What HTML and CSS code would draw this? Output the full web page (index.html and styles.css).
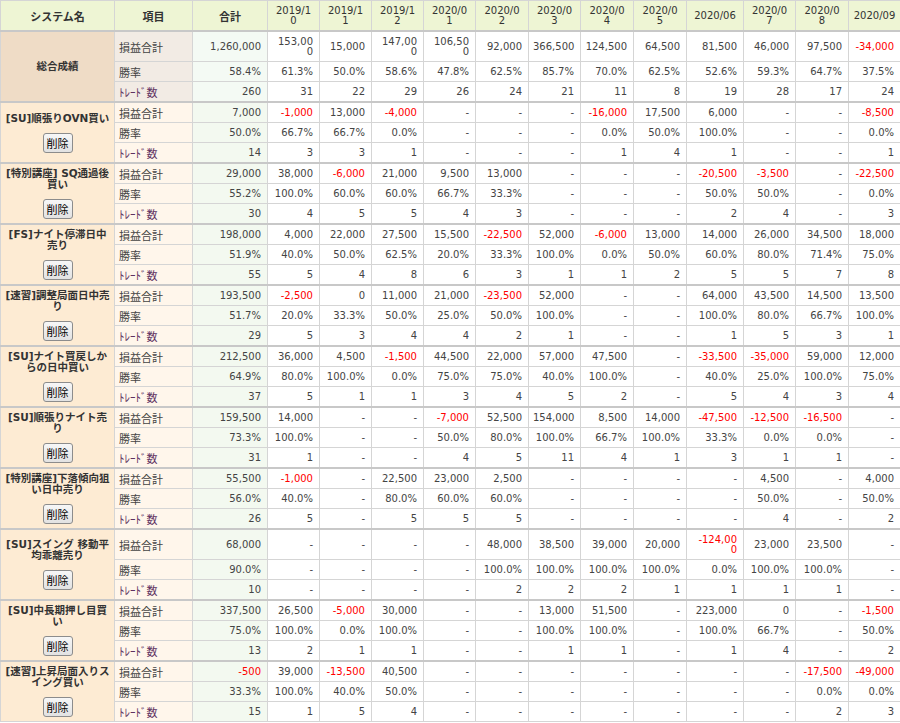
FILE: index.html
```html
<!DOCTYPE html>
<html lang="ja">
<head>
<meta charset="utf-8">
<title>システム成績</title>
<link rel="stylesheet" href="styles.css">
</head>
<body>
<table class="perf">
<colgroup>
<col class="c-name"><col class="c-item"><col class="c-total">
<col class="c-m52"><col class="c-m52"><col class="c-m52"><col class="c-m52"><col class="c-m53"><col class="c-m52"><col class="c-m53"><col class="c-m53"><col class="c-m57"><col class="c-m52"><col class="c-m53"><col class="c-m52">
</colgroup>
<thead>
<tr>
<th class="hj">システム名</th><th class="hj">項目</th><th class="hj">合計</th>
<th class="w"><span>2019/10</span></th><th class="w"><span>2019/11</span></th><th class="w"><span>2019/12</span></th><th class="w"><span>2020/01</span></th><th class="w"><span>2020/02</span></th><th class="w"><span>2020/03</span></th><th class="w"><span>2020/04</span></th><th class="w"><span>2020/05</span></th><th>2020/06</th><th class="w"><span>2020/07</span></th><th class="w"><span>2020/08</span></th><th>2020/09</th>
</tr>
</thead>

<tbody class="grp sum">
<tr><td class="nm" rowspan="3"><div class="nm-t">総合成績</div></td><td class="it">損益合計</td><td class="tt">1,260,000</td><td class="w"><span>153,000</span></td><td>15,000</td><td class="w"><span>147,000</span></td><td class="w"><span>106,500</span></td><td>92,000</td><td>366,500</td><td>124,500</td><td>64,500</td><td>81,500</td><td>46,000</td><td>97,500</td><td class="r">-34,000</td></tr>
<tr><td class="it">勝率</td><td class="tt">58.4%</td><td>61.3%</td><td>50.0%</td><td>58.6%</td><td>47.8%</td><td>62.5%</td><td>85.7%</td><td>70.0%</td><td>62.5%</td><td>52.6%</td><td>59.3%</td><td>64.7%</td><td>37.5%</td></tr>
<tr><td class="it tr">ﾄﾚｰﾄﾞ数</td><td class="tt">260</td><td>31</td><td>22</td><td>29</td><td>26</td><td>24</td><td>21</td><td>11</td><td>8</td><td>19</td><td>28</td><td>17</td><td>24</td></tr>
</tbody>

<tbody class="grp">
<tr><td class="nm" rowspan="3"><div class="nm-t">[SU]順張りOVN買い</div><button class="del" type="button">削除</button></td><td class="it">損益合計</td><td class="tt">7,000</td><td class="r">-1,000</td><td>13,000</td><td class="r">-4,000</td><td>-</td><td>-</td><td>-</td><td class="r">-16,000</td><td>17,500</td><td>6,000</td><td>-</td><td>-</td><td class="r">-8,500</td></tr>
<tr><td class="it">勝率</td><td class="tt">50.0%</td><td>66.7%</td><td>66.7%</td><td>0.0%</td><td>-</td><td>-</td><td>-</td><td>0.0%</td><td>50.0%</td><td>100.0%</td><td>-</td><td>-</td><td>0.0%</td></tr>
<tr><td class="it tr">ﾄﾚｰﾄﾞ数</td><td class="tt">14</td><td>3</td><td>3</td><td>1</td><td>-</td><td>-</td><td>-</td><td>1</td><td>4</td><td>1</td><td>-</td><td>-</td><td>1</td></tr>
</tbody>

<tbody class="grp">
<tr><td class="nm" rowspan="3"><div class="nm-t">[特別講座] SQ通過後<br>買い</div><button class="del" type="button">削除</button></td><td class="it">損益合計</td><td class="tt">29,000</td><td>38,000</td><td class="r">-6,000</td><td>21,000</td><td>9,500</td><td>13,000</td><td>-</td><td>-</td><td>-</td><td class="r">-20,500</td><td class="r">-3,500</td><td>-</td><td class="r">-22,500</td></tr>
<tr><td class="it">勝率</td><td class="tt">55.2%</td><td>100.0%</td><td>60.0%</td><td>60.0%</td><td>66.7%</td><td>33.3%</td><td>-</td><td>-</td><td>-</td><td>50.0%</td><td>50.0%</td><td>-</td><td>0.0%</td></tr>
<tr><td class="it tr">ﾄﾚｰﾄﾞ数</td><td class="tt">30</td><td>4</td><td>5</td><td>5</td><td>4</td><td>3</td><td>-</td><td>-</td><td>-</td><td>2</td><td>4</td><td>-</td><td>3</td></tr>
</tbody>

<tbody class="grp">
<tr><td class="nm" rowspan="3"><div class="nm-t">[FS]ナイト停滞日中<br>売り</div><button class="del" type="button">削除</button></td><td class="it">損益合計</td><td class="tt">198,000</td><td>4,000</td><td>22,000</td><td>27,500</td><td>15,500</td><td class="r">-22,500</td><td>52,000</td><td class="r">-6,000</td><td>13,000</td><td>14,000</td><td>26,000</td><td>34,500</td><td>18,000</td></tr>
<tr><td class="it">勝率</td><td class="tt">51.9%</td><td>40.0%</td><td>50.0%</td><td>62.5%</td><td>20.0%</td><td>33.3%</td><td>100.0%</td><td>0.0%</td><td>50.0%</td><td>60.0%</td><td>80.0%</td><td>71.4%</td><td>75.0%</td></tr>
<tr><td class="it tr">ﾄﾚｰﾄﾞ数</td><td class="tt">55</td><td>5</td><td>4</td><td>8</td><td>6</td><td>3</td><td>1</td><td>1</td><td>2</td><td>5</td><td>5</td><td>7</td><td>8</td></tr>
</tbody>

<tbody class="grp">
<tr><td class="nm" rowspan="3"><div class="nm-t">[速習]調整局面日中売<br>り</div><button class="del" type="button">削除</button></td><td class="it">損益合計</td><td class="tt">193,500</td><td class="r">-2,500</td><td>0</td><td>11,000</td><td>21,000</td><td class="r">-23,500</td><td>52,000</td><td>-</td><td>-</td><td>64,000</td><td>43,500</td><td>14,500</td><td>13,500</td></tr>
<tr><td class="it">勝率</td><td class="tt">51.7%</td><td>20.0%</td><td>33.3%</td><td>50.0%</td><td>25.0%</td><td>50.0%</td><td>100.0%</td><td>-</td><td>-</td><td>100.0%</td><td>80.0%</td><td>66.7%</td><td>100.0%</td></tr>
<tr><td class="it tr">ﾄﾚｰﾄﾞ数</td><td class="tt">29</td><td>5</td><td>3</td><td>4</td><td>4</td><td>2</td><td>1</td><td>-</td><td>-</td><td>1</td><td>5</td><td>3</td><td>1</td></tr>
</tbody>

<tbody class="grp">
<tr><td class="nm" rowspan="3"><div class="nm-t">[SU]ナイト買戻しか<br>らの日中買い</div><button class="del" type="button">削除</button></td><td class="it">損益合計</td><td class="tt">212,500</td><td>36,000</td><td>4,500</td><td class="r">-1,500</td><td>44,500</td><td>22,000</td><td>57,000</td><td>47,500</td><td>-</td><td class="r">-33,500</td><td class="r">-35,000</td><td>59,000</td><td>12,000</td></tr>
<tr><td class="it">勝率</td><td class="tt">64.9%</td><td>80.0%</td><td>100.0%</td><td>0.0%</td><td>75.0%</td><td>75.0%</td><td>40.0%</td><td>100.0%</td><td>-</td><td>40.0%</td><td>25.0%</td><td>100.0%</td><td>75.0%</td></tr>
<tr><td class="it tr">ﾄﾚｰﾄﾞ数</td><td class="tt">37</td><td>5</td><td>1</td><td>1</td><td>3</td><td>4</td><td>5</td><td>2</td><td>-</td><td>5</td><td>4</td><td>3</td><td>4</td></tr>
</tbody>

<tbody class="grp">
<tr><td class="nm" rowspan="3"><div class="nm-t">[SU]順張りナイト売<br>り</div><button class="del" type="button">削除</button></td><td class="it">損益合計</td><td class="tt">159,500</td><td>14,000</td><td>-</td><td>-</td><td class="r">-7,000</td><td>52,500</td><td>154,000</td><td>8,500</td><td>14,000</td><td class="r">-47,500</td><td class="r">-12,500</td><td class="r">-16,500</td><td>-</td></tr>
<tr><td class="it">勝率</td><td class="tt">73.3%</td><td>100.0%</td><td>-</td><td>-</td><td>50.0%</td><td>80.0%</td><td>100.0%</td><td>66.7%</td><td>100.0%</td><td>33.3%</td><td>0.0%</td><td>0.0%</td><td>-</td></tr>
<tr><td class="it tr">ﾄﾚｰﾄﾞ数</td><td class="tt">31</td><td>1</td><td>-</td><td>-</td><td>4</td><td>5</td><td>11</td><td>4</td><td>1</td><td>3</td><td>1</td><td>1</td><td>-</td></tr>
</tbody>

<tbody class="grp">
<tr><td class="nm" rowspan="3"><div class="nm-t">[特別講座]下落傾向狙<br>い日中売り</div><button class="del" type="button">削除</button></td><td class="it">損益合計</td><td class="tt">55,500</td><td class="r">-1,000</td><td>-</td><td>22,500</td><td>23,000</td><td>2,500</td><td>-</td><td>-</td><td>-</td><td>-</td><td>4,500</td><td>-</td><td>4,000</td></tr>
<tr><td class="it">勝率</td><td class="tt">56.0%</td><td>40.0%</td><td>-</td><td>80.0%</td><td>60.0%</td><td>60.0%</td><td>-</td><td>-</td><td>-</td><td>-</td><td>50.0%</td><td>-</td><td>50.0%</td></tr>
<tr><td class="it tr">ﾄﾚｰﾄﾞ数</td><td class="tt">26</td><td>5</td><td>-</td><td>5</td><td>5</td><td>5</td><td>-</td><td>-</td><td>-</td><td>-</td><td>4</td><td>-</td><td>2</td></tr>
</tbody>

<tbody class="grp">
<tr><td class="nm" rowspan="3"><div class="nm-t">[SU]スイング 移動平<br>均乖離売り</div><button class="del" type="button">削除</button></td><td class="it">損益合計</td><td class="tt">68,000</td><td>-</td><td>-</td><td>-</td><td>-</td><td>48,000</td><td>38,500</td><td>39,000</td><td>20,000</td><td class="r w"><span>-124,000</span></td><td>23,000</td><td>23,500</td><td>-</td></tr>
<tr><td class="it">勝率</td><td class="tt">90.0%</td><td>-</td><td>-</td><td>-</td><td>-</td><td>100.0%</td><td>100.0%</td><td>100.0%</td><td>100.0%</td><td>0.0%</td><td>100.0%</td><td>100.0%</td><td>-</td></tr>
<tr><td class="it tr">ﾄﾚｰﾄﾞ数</td><td class="tt">10</td><td>-</td><td>-</td><td>-</td><td>-</td><td>2</td><td>2</td><td>2</td><td>1</td><td>1</td><td>1</td><td>1</td><td>-</td></tr>
</tbody>

<tbody class="grp">
<tr><td class="nm" rowspan="3"><div class="nm-t">[SU]中長期押し目買<br>い</div><button class="del" type="button">削除</button></td><td class="it">損益合計</td><td class="tt">337,500</td><td>26,500</td><td class="r">-5,000</td><td>30,000</td><td>-</td><td>-</td><td>13,000</td><td>51,500</td><td>-</td><td>223,000</td><td>0</td><td>-</td><td class="r">-1,500</td></tr>
<tr><td class="it">勝率</td><td class="tt">75.0%</td><td>100.0%</td><td>0.0%</td><td>100.0%</td><td>-</td><td>-</td><td>100.0%</td><td>100.0%</td><td>-</td><td>100.0%</td><td>66.7%</td><td>-</td><td>50.0%</td></tr>
<tr><td class="it tr">ﾄﾚｰﾄﾞ数</td><td class="tt">13</td><td>2</td><td>1</td><td>1</td><td>-</td><td>-</td><td>1</td><td>1</td><td>-</td><td>1</td><td>4</td><td>-</td><td>2</td></tr>
</tbody>

<tbody class="grp">
<tr><td class="nm" rowspan="3"><div class="nm-t">[速習]上昇局面入りス<br>イング買い</div><button class="del" type="button">削除</button></td><td class="it">損益合計</td><td class="tt r">-500</td><td>39,000</td><td class="r">-13,500</td><td>40,500</td><td>-</td><td>-</td><td>-</td><td>-</td><td>-</td><td>-</td><td>-</td><td class="r">-17,500</td><td class="r">-49,000</td></tr>
<tr><td class="it">勝率</td><td class="tt">33.3%</td><td>100.0%</td><td>40.0%</td><td>50.0%</td><td>-</td><td>-</td><td>-</td><td>-</td><td>-</td><td>-</td><td>-</td><td>0.0%</td><td>0.0%</td></tr>
<tr><td class="it tr">ﾄﾚｰﾄﾞ数</td><td class="tt">15</td><td>1</td><td>5</td><td>4</td><td>-</td><td>-</td><td>-</td><td>-</td><td>-</td><td>-</td><td>-</td><td>2</td><td>3</td></tr>
</tbody>
</table>
</body>
</html>
```

FILE: styles.css
```css
html, body {
  margin: 0;
  padding: 0;
  background: #ffffff;
}

.perf {
  border-collapse: collapse;
  table-layout: fixed;
  width: 900px;
  font-family: "DejaVu Sans", "Noto Sans CJK JP", sans-serif;
  font-size: 10px;
  line-height: 10px;
  color: #444444;
}

.c-name { width: 114px; }
.c-item { width: 78px; }
.c-total { width: 75px; }
.c-m52 { width: 52px; }
.c-m53 { width: 53px; }
.c-m57 { width: 57px; }

.perf th,
.perf td {
  border: 1px solid #d5d5d5;
  padding: 5px 6px 4px 4px;
  white-space: nowrap;
  text-align: right;
  vertical-align: middle;
}

.perf th {
  background: #eef5d4;
  color: #333333;
  font-weight: normal;
  text-align: center;
  padding: 5px 3px 4px 3px;
}

.perf th.hj {
  font-family: "Noto Sans CJK JP", sans-serif;
  font-size: 11px;
  font-weight: bold;
}

.w span {
  display: block;
  width: 40px;
  margin-left: auto;
  white-space: normal;
  word-break: break-all;
}

.perf th.w span {
  margin: 0 auto;
  text-align: center;
}

.perf td.r {
  color: #ff0000;
}

.grp tr:first-child td {
  border-top: 2px solid #c8c8c8;
}

.perf td.nm {
  background: #fdebd3;
  text-align: center;
  color: #333333;
  padding: 3px 1px;
  font-family: "DejaVu Sans", "Noto Sans CJK JP", sans-serif;
  font-size: 10.5px;
  font-weight: bold;
}

.nm-t {
  line-height: 11px;
}

.del {
  display: inline-block;
  margin-top: 9px;
  height: 20px;
  padding: 0 3px;
  border: 1px solid #8c8c8c;
  border-radius: 3px;
  background: linear-gradient(#f7f7f7, #e2e2e2);
  color: #000000;
  font-family: "Noto Sans CJK JP", sans-serif;
  font-size: 11px;
  font-weight: normal;
  line-height: 16px;
  vertical-align: top;
}

.perf td.it {
  background: #fff6eb;
  text-align: left;
  font-family: "Noto Sans CJK JP", sans-serif;
  font-size: 11px;
  color: #444444;
}

.perf td.it.tr {
  color: #5e3160;
}

.perf td.tt {
  background: #f3f9f0;
}

.sum td.nm {
  background: #efdcc6;
}

.sum td.it {
  background: #f2ebe4;
}

.sum td.tt {
  background: #f4faf4;
}
```
